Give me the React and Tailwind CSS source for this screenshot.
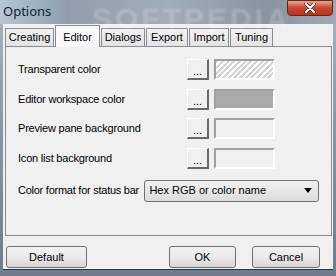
export default function App(){
    const font = { fontFamily: '"Liberation Sans", Arial, sans-serif' };
    const tabs = [
        { t: 'Creating', w: 'w-[49px]' },
        { t: 'Editor', w: 'w-[45px]' },
        { t: 'Dialogs', w: 'w-[44px]' },
        { t: 'Export', w: 'w-[42px]' },
        { t: 'Import', w: 'w-[40px]' },
        { t: 'Tuning', w: 'w-[43px]' },
    ];
    const rows = [
        { label: 'Transparent color', kind: 'hatch' },
        { label: 'Editor workspace color', kind: 'gray' },
        { label: 'Preview pane background', kind: 'empty' },
        { label: 'Icon list background', kind: 'empty' },
    ];
    return (
        <div className="w-[336px] h-[276px] flex flex-col bg-gradient-to-b from-[#a9b6c2] via-[#8695a3] to-[#6f7d8a] overflow-hidden" style={font}>
            {/* title bar */}
            <div className="relative h-[24px] flex items-start justify-between bg-[linear-gradient(90deg,#b7c6d3_0%,#8f9eab_20%,#a2adb7_50%,#8794a1_80%,#9eabb7_100%)]">
                <span className="pl-[3px] pt-[3px] text-[13px] leading-[16px] text-[#0f1f3c]" style={{ fontFamily: '"Noto Sans", "Liberation Sans", sans-serif' }}>Options</span>
                <span className="absolute left-[92px] top-[-4px] text-[30px] font-bold tracking-[3px] text-white/20 blur-[1px]">SOFTPEDIA</span>
                <div className="mr-[3px] w-[46px] h-[16px] rounded-b-[4px] border border-[#5a2a20] bg-gradient-to-b from-[#e6a393] via-[#c9452c] to-[#b8341c] flex items-center justify-center">
                    <svg width="12" height="10" viewBox="0 0 12 10">
                        <path d="M2 1 L10 9 M10 1 L2 9" stroke="#3a2a2a" strokeWidth="3.4" strokeLinecap="round" />
                        <path d="M2 1 L10 9 M10 1 L2 9" stroke="#ffffff" strokeWidth="2" strokeLinecap="round" />
                    </svg>
                </div>
            </div>
            {/* client area */}
            <div className="mx-[3px] h-[246px] bg-[#f0f0f0] flex flex-col pt-[1px] border-b border-[#2a3540]">
                <div className="flex items-end gap-[1px] pl-[2px] h-[21px]">
                    {tabs.map(({ t, w }) => t === 'Editor' ? (
                        <div key={t} className={`relative z-10 ${w} h-[22px] -mb-[1px] bg-[#f9f9f9] border border-[#898c95] border-b-0 text-[11px] text-black flex justify-center items-start pt-[3px]`}>{t}</div>
                    ) : (
                        <div key={t} className={`${w} h-[18px] bg-gradient-to-b from-[#f2f2f2] to-[#e3e3e3] border border-[#898c95] border-b-0 text-[11px] text-black flex items-center justify-center`}>{t}</div>
                    ))}
                </div>
                <div className="ml-[2px] w-[327px] h-[190px] border border-[#898c95] bg-[#f0f0f0] px-[12px] pt-[12px] flex flex-col">
                    <div className="flex flex-col gap-[8.5px]">
                        {rows.map(r => (
                            <div key={r.label} className="flex items-center h-[21px]">
                                <span className="w-[169px] whitespace-nowrap text-[11px] tracking-[-0.2px] text-black">{r.label}</span>
                                <div className="w-[22px] h-[21px] bg-[#f0f0f0] border-t border-l border-t-white border-l-white border-r-2 border-b-2 border-r-[#696969] border-b-[#696969] flex items-end justify-center pb-[2px] text-[11px] leading-[10px]">...</div>
                                <div className={`ml-[5px] w-[61px] h-[21px] border-t-2 border-l-2 border-t-[#a0a0a0] border-l-[#a0a0a0] border-r-2 border-b-2 border-r-white border-b-white ${r.kind === 'gray' ? 'bg-[#aaaaaa]' : r.kind === 'hatch' ? 'bg-[repeating-linear-gradient(135deg,#d4d4d4_0px,#d4d4d4_2px,#ffffff_2px,#ffffff_4px)]' : 'bg-[#f0f0f0]'}`} />
                            </div>
                        ))}
                    </div>
                    <div className="flex items-center mt-[11px] h-[22px]">
                        <span className="w-[129px] whitespace-nowrap text-[11px] tracking-[-0.25px] text-black">Color format for status bar</span>
                        <div className="w-[178px] h-[22px] rounded-[3px] border border-[#707070] bg-gradient-to-b from-[#f2f2f2] to-[#dcdcdc] flex items-center justify-between pl-[4px] pr-[6px] text-[11px]">
                            <span>Hex RGB or color name</span>
                            <svg width="8" height="5" viewBox="0 0 8 5"><path d="M0 0 H8 L4 5 Z" fill="#000" /></svg>
                        </div>
                    </div>
                </div>
                <div className="flex items-center mt-[10px] pl-[3px] pr-[13px]">
                    <button className="w-[81px] h-[22px] rounded-[3px] border border-[#707070] bg-gradient-to-b from-[#f2f2f2] via-[#ebebeb] to-[#d6d6d6] text-[11px] text-black">Default</button>
                    <button className="ml-auto w-[67px] h-[22px] rounded-[3px] border border-[#707070] bg-gradient-to-b from-[#f2f2f2] via-[#ebebeb] to-[#d6d6d6] text-[11px] text-black">OK</button>
                    <button className="ml-[16px] w-[68px] h-[22px] rounded-[3px] border border-[#707070] bg-gradient-to-b from-[#f2f2f2] via-[#ebebeb] to-[#d6d6d6] text-[11px] text-black">Cancel</button>
                </div>
            </div>
        </div>
    );
}
